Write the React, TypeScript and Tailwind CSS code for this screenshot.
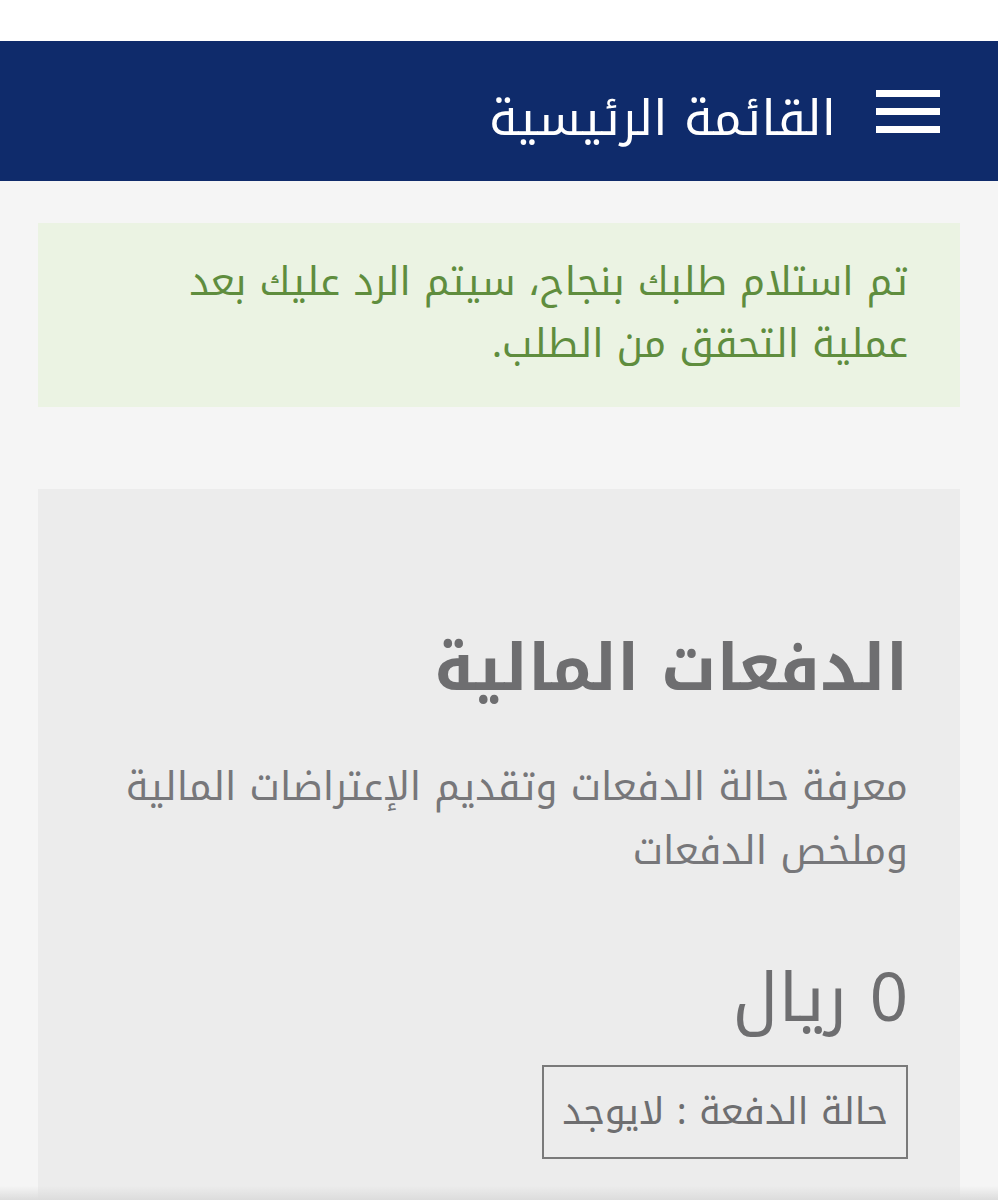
import React from "react";

const arabic = { fontFamily: '"Noto Kufi Arabic", "Noto Sans Arabic", "DejaVu Sans", sans-serif' };

function MenuIcon() {
  return (
    <div className="flex w-[64px] flex-col gap-[11px]">
      <span className="block h-[7px] w-full bg-white" />
      <span className="block h-[7px] w-full bg-white" />
      <span className="block h-[7px] w-full bg-white" />
    </div>
  );
}

export default function App() {
  return (
    <div dir="rtl" style={arabic} className="relative h-[1200px] w-[998px] overflow-hidden bg-[#f5f5f5]">
      <div className="h-[41px] bg-white" />
      <header className="flex h-[140px] items-center gap-[40px] bg-[#0f2b6b] pr-[58px]">
        <MenuIcon />
        <h1 className="pt-[14px] text-[49px] leading-none text-white">القائمة الرئيسية</h1>
      </header>

      <main className="px-[38px] pt-[42px]">
        <div className="h-[184px] bg-[#ebf3e3] pr-[52px] pl-[150px] pt-[28px] text-[39px] leading-[62px] text-[#5f8d3e]">
          تم استلام طلبك بنجاح، سيتم الرد عليك بعد عملية التحقق من الطلب.
        </div>

        <section className="mt-[82px] h-[720px] bg-[#ececec] pr-[52px] pt-[140px]">
          <h2 className="text-[64px] font-bold leading-[80px] text-[#6e6e70]">الدفعات المالية</h2>
          <p className="mt-[46px] pl-[30px] text-[39px] leading-[64px] text-[#77777a]">
            معرفة حالة الدفعات وتقديم الإعتراضات المالية وملخص الدفعات
          </p>
          <div className="mt-[76px] text-[67px] leading-[80px] text-[#6e6e70]">0 ريال</div>
          <div className="mt-[26px] inline-block border-2 border-[#7a7a7a] px-[18px] py-[15px] text-[37px] leading-[60px] text-[#6e6e70]">
            حالة الدفعة : لايوجد
          </div>
        </section>
      </main>

      <div className="pointer-events-none absolute bottom-0 left-0 right-0 h-[14px] bg-gradient-to-b from-transparent to-[#dcdcdc]" />
    </div>
  );
}
